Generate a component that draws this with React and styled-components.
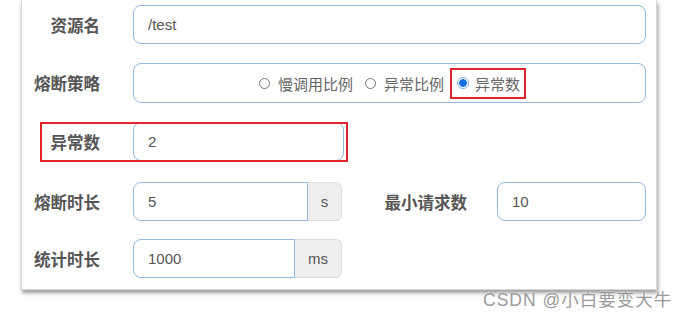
import React from "react";
import styled, { createGlobalStyle } from "styled-components";

const Global = createGlobalStyle`
  html, body { margin: 0; padding: 0; background: #fff; }
  body { font-family: "Liberation Sans", "Noto Sans CJK SC", sans-serif; }
  * { box-sizing: border-box; }
`;

const Page = styled.div`
  position: relative;
  width: 691px;
  height: 318px;
  overflow: hidden;
  background: #fff;
`;

const Card = styled.div`
  margin-left: 21px;
  width: 636px;
  padding: 5px 10px 11px 0;
  background: #fff;
  border: 1px solid #d9d9d9;
  border-top: none;
  box-shadow: 1px 3px 4px rgba(0, 0, 0, 0.4);
`;

const Row = styled.div`
  position: relative;
  display: flex;
  align-items: center;
  height: ${(p) => p.$h || 39}px;
  margin-bottom: ${(p) => p.$mb || 0}px;
`;

const Label = styled.div`
  flex-shrink: 0;
  width: ${(p) => p.$w || 78}px;
  margin-right: ${(p) => p.$mr || 33}px;
  text-align: right;
  font-family: "Noto Sans CJK SC", sans-serif;
  font-weight: 700;
  font-size: 16.5px;
  color: #555;
  white-space: nowrap;
`;

const Field = styled.div`
  flex-shrink: 0;
  display: flex;
  align-items: center;
  width: ${(p) => p.$w}px;
  height: 100%;
  padding-left: 14px;
  border: 1px solid #93b8e2;
  border-radius: ${(p) => (p.$grouped ? "8px 0 0 8px" : "8px")};
  background: #fff;
  font-family: "Liberation Sans", sans-serif;
  font-size: 15px;
  color: #555;
`;

const Group = styled.div`
  display: flex;
  height: 100%;
  flex-shrink: 0;
`;

const Addon = styled.div`
  display: flex;
  align-items: center;
  justify-content: center;
  width: ${(p) => p.$w}px;
  height: 100%;
  background: #eee;
  border: 1px solid #dcdcdc;
  border-left: none;
  border-radius: 0 6px 6px 0;
  font-family: "Liberation Sans", sans-serif;
  font-size: 15px;
  color: #555;
`;

const RadioBox = styled.div`
  display: flex;
  align-items: center;
  justify-content: center;
  width: 513px;
  height: 100%;
  border: 1px solid #93b8e2;
  border-radius: 8px;
`;

const Option = styled.label`
  display: flex;
  align-items: center;
  height: 31px;
  padding: ${(p) => (p.$mark ? "0 4px 0 5px" : "0 6px")};
  border: ${(p) => (p.$mark ? "2px solid #e3242b" : "none")};
  font-family: "Noto Sans CJK SC", sans-serif;
  font-size: 15px;
  color: #666;
  white-space: nowrap;
`;

const Dot = styled.span`
  display: inline-block;
  width: ${(p) => (p.$on ? 12 : 11)}px;
  height: ${(p) => (p.$on ? 12 : 11)}px;
  margin-right: ${(p) => (p.$on ? 6 : 8)}px;
  border-radius: 50%;
  border: 1px solid ${(p) => (p.$on ? "#7fb0ea" : "#777")};
  background: ${(p) =>
    p.$on ? "radial-gradient(circle, #1570e8 0 3.5px, #fff 4.2px)" : "#fff"};
`;

const Highlight = styled.div`
  position: absolute;
  left: 18px;
  top: 0;
  width: 308px;
  height: 40px;
  border: 2px solid #e3242b;
  pointer-events: none;
`;

const Watermark = styled.div`
  position: absolute;
  left: 483px;
  top: 286px;
  font-family: "Liberation Sans", "Noto Sans CJK SC", sans-serif;
  font-size: 17.5px;
  letter-spacing: 1px;
  color: #9a9a9a;
  text-shadow: 0 0 2px #fff;
  white-space: nowrap;
`;

export default function App() {
  return (
    <Page>
      <Global />
      <Card>
        <Row $mb={19}>
          <Label>资源名</Label>
          <Field $w={513}>/test</Field>
        </Row>
        <Row $h={40} $mb={19}>
          <Label>熔断策略</Label>
          <RadioBox>
            <Option>
              <Dot />
              慢调用比例
            </Option>
            <Option>
              <Dot />
              异常比例
            </Option>
            <Option $mark>
              <Dot $on />
              异常数
            </Option>
          </RadioBox>
        </Row>
        <Row $mb={21}>
          <Label>异常数</Label>
          <Field $w={211}>2</Field>
          <Highlight />
        </Row>
        <Row $mb={18}>
          <Label>熔断时长</Label>
          <Group>
            <Field $w={175} $grouped>5</Field>
            <Addon $w={34}>s</Addon>
          </Group>
          <Label $w={125} $mr={30}>最小请求数</Label>
          <Field $w={149}>10</Field>
        </Row>
        <Row>
          <Label>统计时长</Label>
          <Group>
            <Field $w={162} $grouped>1000</Field>
            <Addon $w={47}>ms</Addon>
          </Group>
        </Row>
      </Card>
      <Watermark>CSDN @小白要变大牛</Watermark>
    </Page>
  );
}
